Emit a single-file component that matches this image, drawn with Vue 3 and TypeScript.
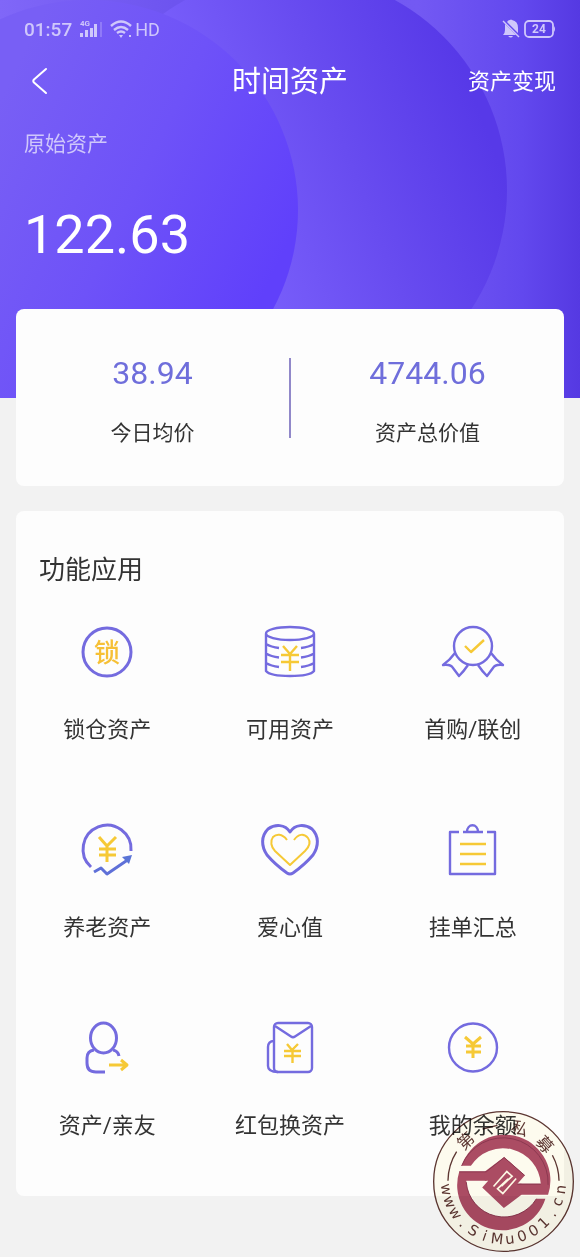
<script setup lang="ts">
type IconName =
  | 'lock' | 'coins' | 'medal' | 'growth' | 'heart' | 'clipboard' | 'person' | 'envelope' | 'balance'

interface Feature {
  icon: IconName
  label: string
}

interface SealGlyph {
  char: string
  angle: number
}

const stats = [
  { value: '38.94', label: '今日均价' },
  { value: '4744.06', label: '资产总价值' },
]

const features: Feature[] = [
  { icon: 'lock', label: '锁仓资产' },
  { icon: 'coins', label: '可用资产' },
  { icon: 'medal', label: '首购/联创' },
  { icon: 'growth', label: '养老资产' },
  { icon: 'heart', label: '爱心值' },
  { icon: 'clipboard', label: '挂单汇总' },
  { icon: 'person', label: '资产/亲友' },
  { icon: 'envelope', label: '红包换资产' },
  { icon: 'balance', label: '我的余额' },
]

const sealTop: SealGlyph[] = [
  { char: '第', angle: -43 },
  { char: '一', angle: -14 },
  { char: '私', angle: 17 },
  { char: '募', angle: 48 },
]

const site = 'www.SiMu001.cn'
const sealBottom: SealGlyph[] = site.split('').map((char, i) => ({
  char,
  angle: 82 - (i * 164) / (site.length - 1),
}))
</script>

<template>
  <div class="page">
    <header class="hero">
      <svg class="hero-bg" viewBox="0 0 580 398" preserveAspectRatio="none" aria-hidden="true">
        <defs>
          <linearGradient id="sky" x1="0" y1="0" x2="1" y2="0">
            <stop offset="0" stop-color="#8067f8" />
            <stop offset="0.3" stop-color="#6d54ef" />
            <stop offset="0.72" stop-color="#7359f3" />
            <stop offset="0.9" stop-color="#6248ee" />
            <stop offset="1" stop-color="#5539e2" />
          </linearGradient>
          <linearGradient id="disc-right" gradientUnits="userSpaceOnUse" x1="250" y1="290" x2="510" y2="190">
            <stop offset="0" stop-color="#795ffb" />
            <stop offset="0.5" stop-color="#684cf0" />
            <stop offset="1" stop-color="#5739e8" />
          </linearGradient>
          <linearGradient id="disc-left" gradientUnits="userSpaceOnUse" x1="0" y1="100" x2="290" y2="240">
            <stop offset="0" stop-color="#785ff5" />
            <stop offset="0.5" stop-color="#6e52f8" />
            <stop offset="1" stop-color="#6040fb" />
          </linearGradient>
        </defs>
        <rect width="580" height="398" fill="url(#sky)" />
        <circle cx="290" cy="190" r="217" fill="url(#disc-right)" />
        <circle cx="88" cy="210" r="210" fill="url(#disc-left)" />
      </svg>

      <div class="status">
        <div class="status-side">
          <span class="clock">01:57</span>
          <svg width="26" height="20" viewBox="0 0 26 20" fill="currentColor" aria-hidden="true">
            <text x="1" y="7" font-size="8" font-weight="700">4G</text>
            <path d="M1 14h3v4H1zM6 11h3v7H6zM11 9h3v9h-3zM15 5h3v13h-3z" />
            <path d="M21 3h2v15h-2z" opacity=".3" />
          </svg>
          <svg class="wifi" width="26" height="20" viewBox="0 0 26 20" fill="none" stroke="currentColor" stroke-width="2.4" aria-hidden="true">
            <path d="M2 7Q12-2 22 7M5 11q7-6 14 0M8 14q4-3 8 0" />
            <path d="M10 16h4l-2 3z" fill="currentColor" stroke="none" />
            <path d="M20 16h2v2h-2z" fill="currentColor" stroke="none" />
          </svg>
          <span>HD</span>
        </div>
        <div class="status-side">
          <svg width="18" height="20" viewBox="0 0 18 20" fill="currentColor" aria-hidden="true">
            <path d="M5 3q1-2 3-2 1-1 2 0 6 1 6 8v5zM3 5l11 11H1q2-2 2-5zM6 17h5q-2 3-5 0z" />
            <path d="M1 2l16 16" stroke="currentColor" stroke-width="1.4" />
          </svg>
          <svg class="battery" width="32" height="18" viewBox="0 0 32 18" aria-hidden="true">
            <rect x="1" y="1" width="28" height="16" rx="4" fill="none" stroke="currentColor" stroke-width="1.8" />
            <path d="M30 6q2 3 0 6z" fill="currentColor" />
            <text x="15" y="13" text-anchor="middle" font-size="12" font-weight="700" fill="currentColor">24</text>
          </svg>
        </div>
      </div>

      <nav class="nav">
        <button class="back" type="button" aria-label="返回">
          <svg width="18" height="30" viewBox="0 0 18 30" fill="none" stroke="#fff" stroke-width="2" stroke-linecap="round">
            <path d="M15 2 3 12.500q-1.500 1.500 0 3L15 26" />
          </svg>
        </button>
        <h1>时间资产</h1>
        <a class="cash" href="#cash">资产变现</a>
      </nav>

      <p class="origin-label">原始资产</p>
      <p class="origin-value">122.63</p>
    </header>

    <main>
      <section class="card stats">
        <template v-for="(stat, i) in stats" :key="stat.label">
          <i v-if="i > 0" class="divider"></i>
          <div class="stat">
            <strong>{{ stat.value }}</strong>
            <span>{{ stat.label }}</span>
          </div>
        </template>
      </section>

      <section class="card apps">
        <h2>功能应用</h2>
        <div class="grid">
          <button v-for="item in features" :key="item.icon" class="app" type="button">
            <svg class="icon" viewBox="0 0 64 64" aria-hidden="true">
              <template v-if="item.icon === 'lock'">
                <circle class="p thick" cx="32" cy="32" r="24" />
                <text class="glyph" x="32" y="42" text-anchor="middle">锁</text>
              </template>
              <template v-else-if="item.icon === 'coins'">
                <ellipse class="p" cx="32" cy="13.500" rx="24" ry="6.500" />
                <path class="p" d="M8 14V51Q12 56 32 56T56 51V14M8 24q5 3 13 4M8 33.500q5 3 13 4M8 43q5 3 13 4M56 24q-5 3-13 4M56 33.500q-5 3-13 4M56 43q-5 3-13 4" />
                <path class="y" d="M25 26 32 34 39 26M23 35H41M23 42H41M32 34V51" />
              </template>
              <template v-else-if="item.icon === 'medal'">
                <circle class="p" cx="32" cy="26" r="19" />
                <path class="p" d="M14 33Q9 40 2 45 10 44 12 48L18 56Q23 51 27 45M50 33Q55 40 62 45 54 44 52 48L46 56Q41 51 37 45" />
                <path class="y" d="M24 26 30 32 43 20" />
              </template>
              <template v-else-if="item.icon === 'growth'">
                <path class="p thick" d="M56 33A24 24 0 1 0 16 49" />
                <path class="b" d="M19 54 26 50 32 56 54 41" />
                <path d="M47 39 57 37 54 46z" fill="#5a74d6" />
                <path class="y bold" d="M24 19 32 28 41 19M32 28V44M24 31H41M24 37H41" />
              </template>
              <template v-else-if="item.icon === 'heart'">
                <path class="p thick" d="M32 14C27 6 17 6 10 11 3 18 3 28 9 37 15 44 22 50 29 55Q32 57 35 55C42 50 49 44 55 37 61 28 61 18 54 11 47 6 37 6 32 14Z" />
                <path class="y thin" d="M29 22C24 15 18 16 15 19 12 23 13 29 17 33L32 47 47 33C51 29 53 24 50 20 46 15 40 16 36 22" />
              </template>
              <template v-else-if="item.icon === 'clipboard'">
                <path class="p" d="M18 14H9V56H54V14H46M22 14H42M26 14C26 5 37 5 37 14" />
                <path class="y" d="M19 26H45M19 36H45M19 46H45" />
              </template>
              <template v-else-if="item.icon === 'person'">
                <ellipse class="p thick" cx="28.500" cy="22" rx="13" ry="15" />
                <path class="p thick" d="M19 34Q12 35 12 42V47Q12 56 21 56H30M38 34Q43 35 44 40" />
                <path class="y bold" d="M34 49H52M46 44 52 49 46 54" />
              </template>
              <template v-else-if="item.icon === 'envelope'">
                <rect class="p" x="16" y="7" width="38" height="49" rx="4" />
                <path class="p" d="M17 10 33 20.500Q35 22 37 20.500L53 10M16 25Q10 25 10 31V50Q10 56 20 56" />
                <path class="y" d="M29 28 34 34 40 28M26 35H43M26 40H43M34.500 34V47" />
              </template>
              <template v-else>
                <circle class="p" cx="32" cy="31.500" r="24" />
                <path class="y bold" d="M24 21 32 28 40 21M32 28V42M25 30H40M25 36H40" />
              </template>
            </svg>
            <span>{{ item.label }}</span>
          </button>
        </div>
      </section>
    </main>

    <svg class="seal" viewBox="-66 -72 424 424" role="img" aria-label="第一私募 www.SiMu001.cn">
      <circle cx="146" cy="140" r="210" fill="#fffdf0" stroke="#5d3631" stroke-width="4" />
      <g fill="none" stroke="#5d3631" stroke-width="4">
        <path d="M-21 138A167 167 0 0 1 5 50M313 138A167 167 0 0 0 293 61" />
      </g>
      <g fill="#ad4c64">
        <path d="M20 93A135 135 0 0 1 280 180H195V147H258A114 114 0 0 0 48 93Z" />
        <path d="M272 192A135 135 0 0 1 13 110H95V138H34A114 114 0 0 0 245 192Z" />
        <path d="M148 66 210 122 188 147 200 147V180L147 220 82 158 100 138 90 138V110Z" />
      </g>
      <path d="M13 111H94L148 68 210 122M188 148H258M20 93A135 135 0 0 1 280 150M34 142A114 114 0 0 0 245 192" fill="none" stroke="#8c3850" stroke-width="3" />
      <path d="M116 155 156 110 172 124 140 154M184 131 144 176 128 162 160 132" fill="none" stroke="#fffbe6" stroke-width="5" />
      <g transform="translate(146 140)" fill="#5d3631" text-anchor="middle">
        <text v-for="g in sealTop" :key="g.char" class="seal-cjk" y="-149" :transform="`rotate(${g.angle})`">{{ g.char }}</text>
        <text v-for="(g, i) in sealBottom" :key="i" class="seal-latin" y="188" :transform="`rotate(${g.angle})`">{{ g.char }}</text>
      </g>
    </svg>
  </div>
</template>

<style>
body {
  margin: 0;
  background: #f2f2f2;
}
</style>

<style scoped>
.page {
  position: relative;
  min-height: 100vh;
  padding-bottom: 60px;
  box-sizing: border-box;
  background: #f2f2f2;
  color: #333;
  font-family: Roboto, "Noto Sans CJK SC", sans-serif;
}
h1, h2, p {
  margin: 0;
  font-weight: 400;
}
button {
  padding: 0;
  border: 0;
  background: none;
  color: inherit;
  font: inherit;
  cursor: pointer;
}
.hero {
  position: relative;
  padding: 0 24px 131px;
  color: #fff;
}
.hero > * {
  position: relative;
}
.hero > .hero-bg {
  position: absolute;
  inset: 0;
  width: 100%;
  height: 100%;
}
.status {
  display: flex;
  justify-content: space-between;
  align-items: center;
  height: 58px;
  color: #cfc7fb;
  font-size: 18px;
}
.status-side {
  display: flex;
  align-items: center;
}
.clock {
  margin-right: 7px;
  font-size: 19px;
  font-weight: 500;
}
.wifi,
.battery {
  margin-left: 4px;
}
.nav {
  display: grid;
  grid-template-columns: 1fr auto 1fr;
  align-items: center;
  height: 48px;
}
.back {
  display: flex;
  justify-self: start;
  padding-left: 7px;
}
h1 {
  font-size: 29px;
  line-height: 40px;
}
.cash {
  justify-self: end;
  color: #fff;
  font-size: 22px;
  line-height: 32px;
  text-decoration: none;
}
.origin-label {
  padding-top: 22px;
  color: #cfc7fb;
  font-size: 21px;
  line-height: 32px;
}
.origin-value {
  padding-top: 43px;
  font-size: 54px;
  line-height: 64px;
}
main {
  position: relative;
  display: grid;
  gap: 25px;
  margin: -89px 16px 0;
}
.card {
  border-radius: 8px;
  background: #fdfdfd;
}
.stats {
  display: grid;
  grid-template-columns: 1fr 2px 1fr;
  align-items: center;
  padding: 37px 0;
}
.divider {
  height: 80px;
  background: #9188c9;
}
.stat {
  display: grid;
  gap: 24px;
  padding-top: 7px;
  text-align: center;
}
.stat strong {
  color: #6f6edb;
  font-size: 32px;
  font-weight: 400;
  line-height: 40px;
}
.stat span {
  font-size: 21px;
  line-height: 32px;
}
.apps {
  padding: 39px 0 54px;
}
h2 {
  padding-left: 23px;
  font-size: 26px;
  line-height: 40px;
}
.grid {
  display: grid;
  grid-template-columns: repeat(3, 1fr);
  row-gap: 72px;
  margin-top: 30px;
}
.app {
  display: flex;
  flex-direction: column;
  align-items: center;
  gap: 30px;
  font-size: 22px;
  line-height: 32px;
}
.icon {
  width: 64px;
  height: 64px;
}
.p, .y, .b {
  fill: none;
  stroke-width: 2.4;
  stroke-linejoin: round;
}
.p {
  stroke: #746bdf;
}
.b {
  stroke: #5f70d8;
  stroke-width: 3;
}
.y {
  stroke: #f6c936;
}
.thick, .bold {
  stroke-width: 3;
}
.thin {
  stroke-width: 2;
}
.glyph {
  fill: #f6c036;
  font-size: 26px;
  font-weight: 500;
}
.seal {
  position: absolute;
  right: 6px;
  bottom: 5px;
  width: 141px;
  height: 141px;
  mix-blend-mode: multiply;
  pointer-events: none;
}
.seal-cjk {
  font-size: 50px;
}
.seal-latin {
  font-family: "DejaVu Sans", sans-serif;
  font-size: 44px;
}
</style>
